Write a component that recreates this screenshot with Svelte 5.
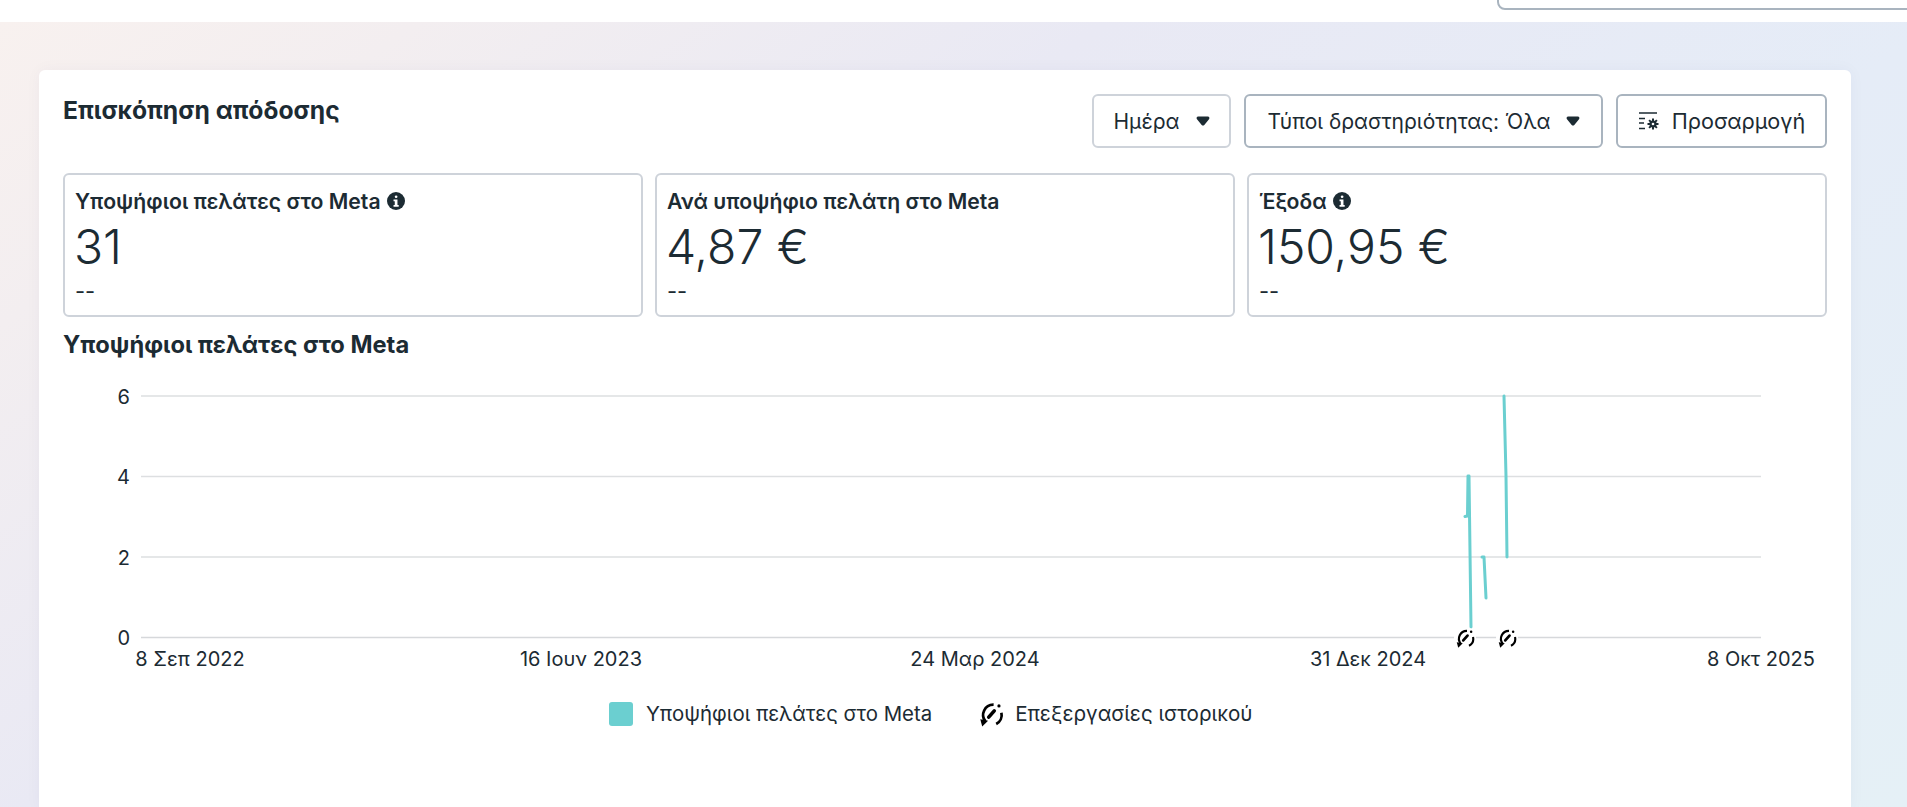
<script>
  const stats = [
    { label: 'Υποψήφιοι πελάτες στο Meta', value: '31', info: true },
    { label: 'Ανά υποψήφιο πελάτη στο Meta', value: '4,87 €', info: false },
    { label: 'Έξοδα', value: '150,95 €', info: true }
  ];
  const rows = [
    { y: 396, t: '6' },
    { y: 476.5, t: '4' },
    { y: 557, t: '2' },
    { y: 637.5, t: '0' }
  ];
  const ticks = [
    { x: 190, t: '8 Σεπ 2022' },
    { x: 581, t: '16 Ιουν 2023' },
    { x: 975, t: '24 Μαρ 2024' },
    { x: 1368, t: '31 Δεκ 2024' },
    { x: 1761, t: '8 Οκτ 2025' }
  ];
  const lines = [
    '1465,516.5 1467.5,516 1468,476 1469,476 1471,627',
    '1482,557 1484,557 1486,598',
    '1504,396 1506,476 1507,557'
  ];
</script>

{#snippet historyShape()}
  <path d="M4.6 12.6A6.300 6.300 0 0 1 9.600 2.300" />
  <path d="M11.200 14.200A6.300 6.300 0 0 0 14.400 7.200" />
  <path d="M1.400 11.300l4.800.9-3.600 3.500z" class="fill" />
  <path d="M6.600 9.900 10 6.100" class="thick" />
  <circle cx="12.900" cy="3" r="1" class="fill" />
{/snippet}

{#snippet info()}
  <svg class="info" viewBox="0 0 16 16" aria-hidden="true">
    <circle cx="8" cy="8" r="8" />
    <rect x="6.900" y="3" width="2.400" height="2.400" rx="1.200" class="cut" />
    <path d="M5.800 6.600h3.500v4.900h1.100v1.600H5.800v-1.600h1.100V8.200H5.800z" class="cut" />
  </svg>
{/snippet}

{#snippet caret()}
  <svg class="caret" viewBox="0 0 14 10" aria-hidden="true">
    <path d="M2.200 0.500h9.600c1.500 0 2.200 1.600 1.200 2.700L8.300 9c-.7.8-1.900.8-2.600 0L1 3.200C0 2.100 .7 .5 2.200 .5z" />
  </svg>
{/snippet}

<div class="page">
  <div class="topbar"><div class="search"></div></div>
  <main class="bg">
    <section class="card">
      <header class="head">
        <h2>Επισκόπηση απόδοσης</h2>
        <div class="actions">
          <button class="btn light">Ημέρα {@render caret()}</button>
          <button class="btn wide">Τύποι δραστηριότητας: Όλα {@render caret()}</button>
          <button class="btn custom">
            <svg class="tune" viewBox="0 0 22 18" aria-hidden="true">
              <path d="M1 1h18M1 6.500h6M1 11h5M1 16.500h6" />
              <circle cx="15" cy="12" r="3.600" class="gear" />
              <path d="M15 6.500v11M9.500 12h11M11.100 8.100l7.800 7.800M18.900 8.100l-7.800 7.800" class="spoke" />
              <circle cx="15" cy="12" r="1.300" class="hole" />
            </svg>
            Προσαρμογή
          </button>
        </div>
      </header>

      <div class="stats">
        {#each stats as s}
          <div class="stat">
            <div class="label">{s.label}{#if s.info}{@render info()}{/if}</div>
            <div class="value">{s.value}</div>
            <div class="delta">--</div>
          </div>
        {/each}
      </div>

      <h3>Υποψήφιοι πελάτες στο Meta</h3>

      <svg class="chart" viewBox="39 370 1812 310" width="1812" height="310">
        {#each rows as r}
          <line x1="141" x2="1761" y1={r.y} y2={r.y} class={r.t === '0' ? 'grid base' : 'grid'} />
          <text x="130" y={r.y + 7.5} text-anchor="end" class="axis">{r.t}</text>
        {/each}
        {#each ticks as t}
          <text x={t.x} y="666" text-anchor="middle" class="axis">{t.t}</text>
        {/each}
        {#each lines as l}
          <polyline points={l} class="series" />
        {/each}
        <circle cx="1465" cy="638" r="11" class="halo" />
        <circle cx="1507" cy="638" r="11" class="halo" />
        <svg class="hist" x="1455" y="628" width="20" height="20" viewBox="0 0 16 16">{@render historyShape()}</svg>
        <svg class="hist" x="1497" y="628" width="20" height="20" viewBox="0 0 16 16">{@render historyShape()}</svg>
      </svg>

      <div class="legend">
        <span class="item"><span class="swatch"></span>Υποψήφιοι πελάτες στο Meta</span>
        <span class="item second">
          <svg class="hist big" viewBox="0 0 16 16" aria-hidden="true">{@render historyShape()}</svg>
          Επεξεργασίες ιστορικού
        </span>
      </div>
    </section>
  </main>
</div>

<style>
  :global(body) { margin: 0; overflow: hidden; background: #fff; }
  .page { width: 1907px; height: 807px; overflow: hidden; font-family: Inter, "Noto Sans", sans-serif; color: #1c2b33; }
  .topbar { height: 22px; background: #fff; position: relative; }
  .search { position: absolute; left: 1497px; right: -10px; top: -20px; height: 30px; border: 2px solid #a9b4bf; border-radius: 8px; box-sizing: border-box; background: #fff; }
  .bg { height: 785px; padding: 48px 56px 0 39px; box-sizing: border-box; background: linear-gradient(144deg, #f8f1ef 0%, #f3eef0 14%, #e9e9f4 37%, #e5ecf7 65%, #e5f0f6 100%); }
  .card { background: #fff; border-radius: 6px 6px 0 0; height: 740px; padding: 24px 24px 0; box-sizing: border-box; box-shadow: 0 0 16px rgba(40, 60, 110, .04); }
  .head { display: flex; justify-content: space-between; align-items: flex-start; }
  h2 { margin: 0; padding-top: 1px; font-size: 24.700px; line-height: 30px; font-weight: 700; }
  .actions { display: flex; gap: 13px; }
  .btn { height: 54px; box-sizing: border-box; border: 2px solid #a9b4bf; border-radius: 6px; background: #fff; color: #1c2b33; font: 400 21px Inter, sans-serif; display: flex; align-items: center; justify-content: center; gap: 16px; padding: 0; }
  .btn.light { width: 139px; border-color: #ced3da; }
  .btn.wide { width: 359px; gap: 15px; }
  .btn.custom { width: 211px; gap: 12px; font-size: 21.600px; }
  .caret { width: 14px; height: 10px; fill: #1c2b33; }
  .tune { width: 22px; height: 18px; }
  .tune path { fill: none; stroke: #1c2b33; stroke-width: 1.400; }
  .tune .gear { fill: #1c2b33; }
  .tune .spoke { stroke-width: 2; }
  .tune .hole { fill: #fff; }
  .stats { display: grid; grid-template-columns: 580px 580px 580px; gap: 12px; margin-top: 25px; }
  .stat { height: 144px; box-sizing: border-box; border: 2px solid #ced3da; border-radius: 6px; padding: 14px 10px; }
  .label { font-size: 21.200px; font-weight: 600; line-height: 24px; display: flex; align-items: center; gap: 6px; }
  .info { width: 18px; height: 18px; }
  .info circle { fill: #1c2b33; }
  .info .cut { fill: #fff; }
  .value { font-size: 48px; font-weight: 300; line-height: 58px; margin-top: 5px; margin-left: -1px; }
  .delta { font-size: 22px; line-height: 22px; margin-top: 4px; }
  h3 { margin: 13px 0 0; font-size: 23.700px; line-height: 30px; font-weight: 700; }
  .chart { display: block; margin: 10px 0 0 -24px; overflow: visible; }
  .grid { stroke: #dddfe1; stroke-width: 1.500; }
  .grid.base { stroke: #d6d8db; }
  .axis { font: 400 20px Inter, sans-serif; fill: #1c2b33; }
  .series { fill: none; stroke: #6bcfd0; stroke-width: 3; stroke-linecap: round; stroke-linejoin: round; }
  .halo { fill: #fff; }
  .hist path { fill: none; stroke: #000; stroke-width: 1.700; }
  .hist .fill { fill: #000; stroke: none; }
  .hist .thick { stroke-width: 2.200; stroke-linecap: round; }
  .legend { display: flex; margin-left: 546px; margin-top: 21px; font-size: 20.400px; line-height: 24px; }
  .item { display: flex; align-items: center; }
  .swatch { width: 24px; height: 24px; border-radius: 3px; background: #6bcfd0; margin-right: 13px; }
  .second { margin-left: 46px; gap: 11px; font-size: 20.600px; }
  .big { width: 26px; height: 26px; }
</style>
